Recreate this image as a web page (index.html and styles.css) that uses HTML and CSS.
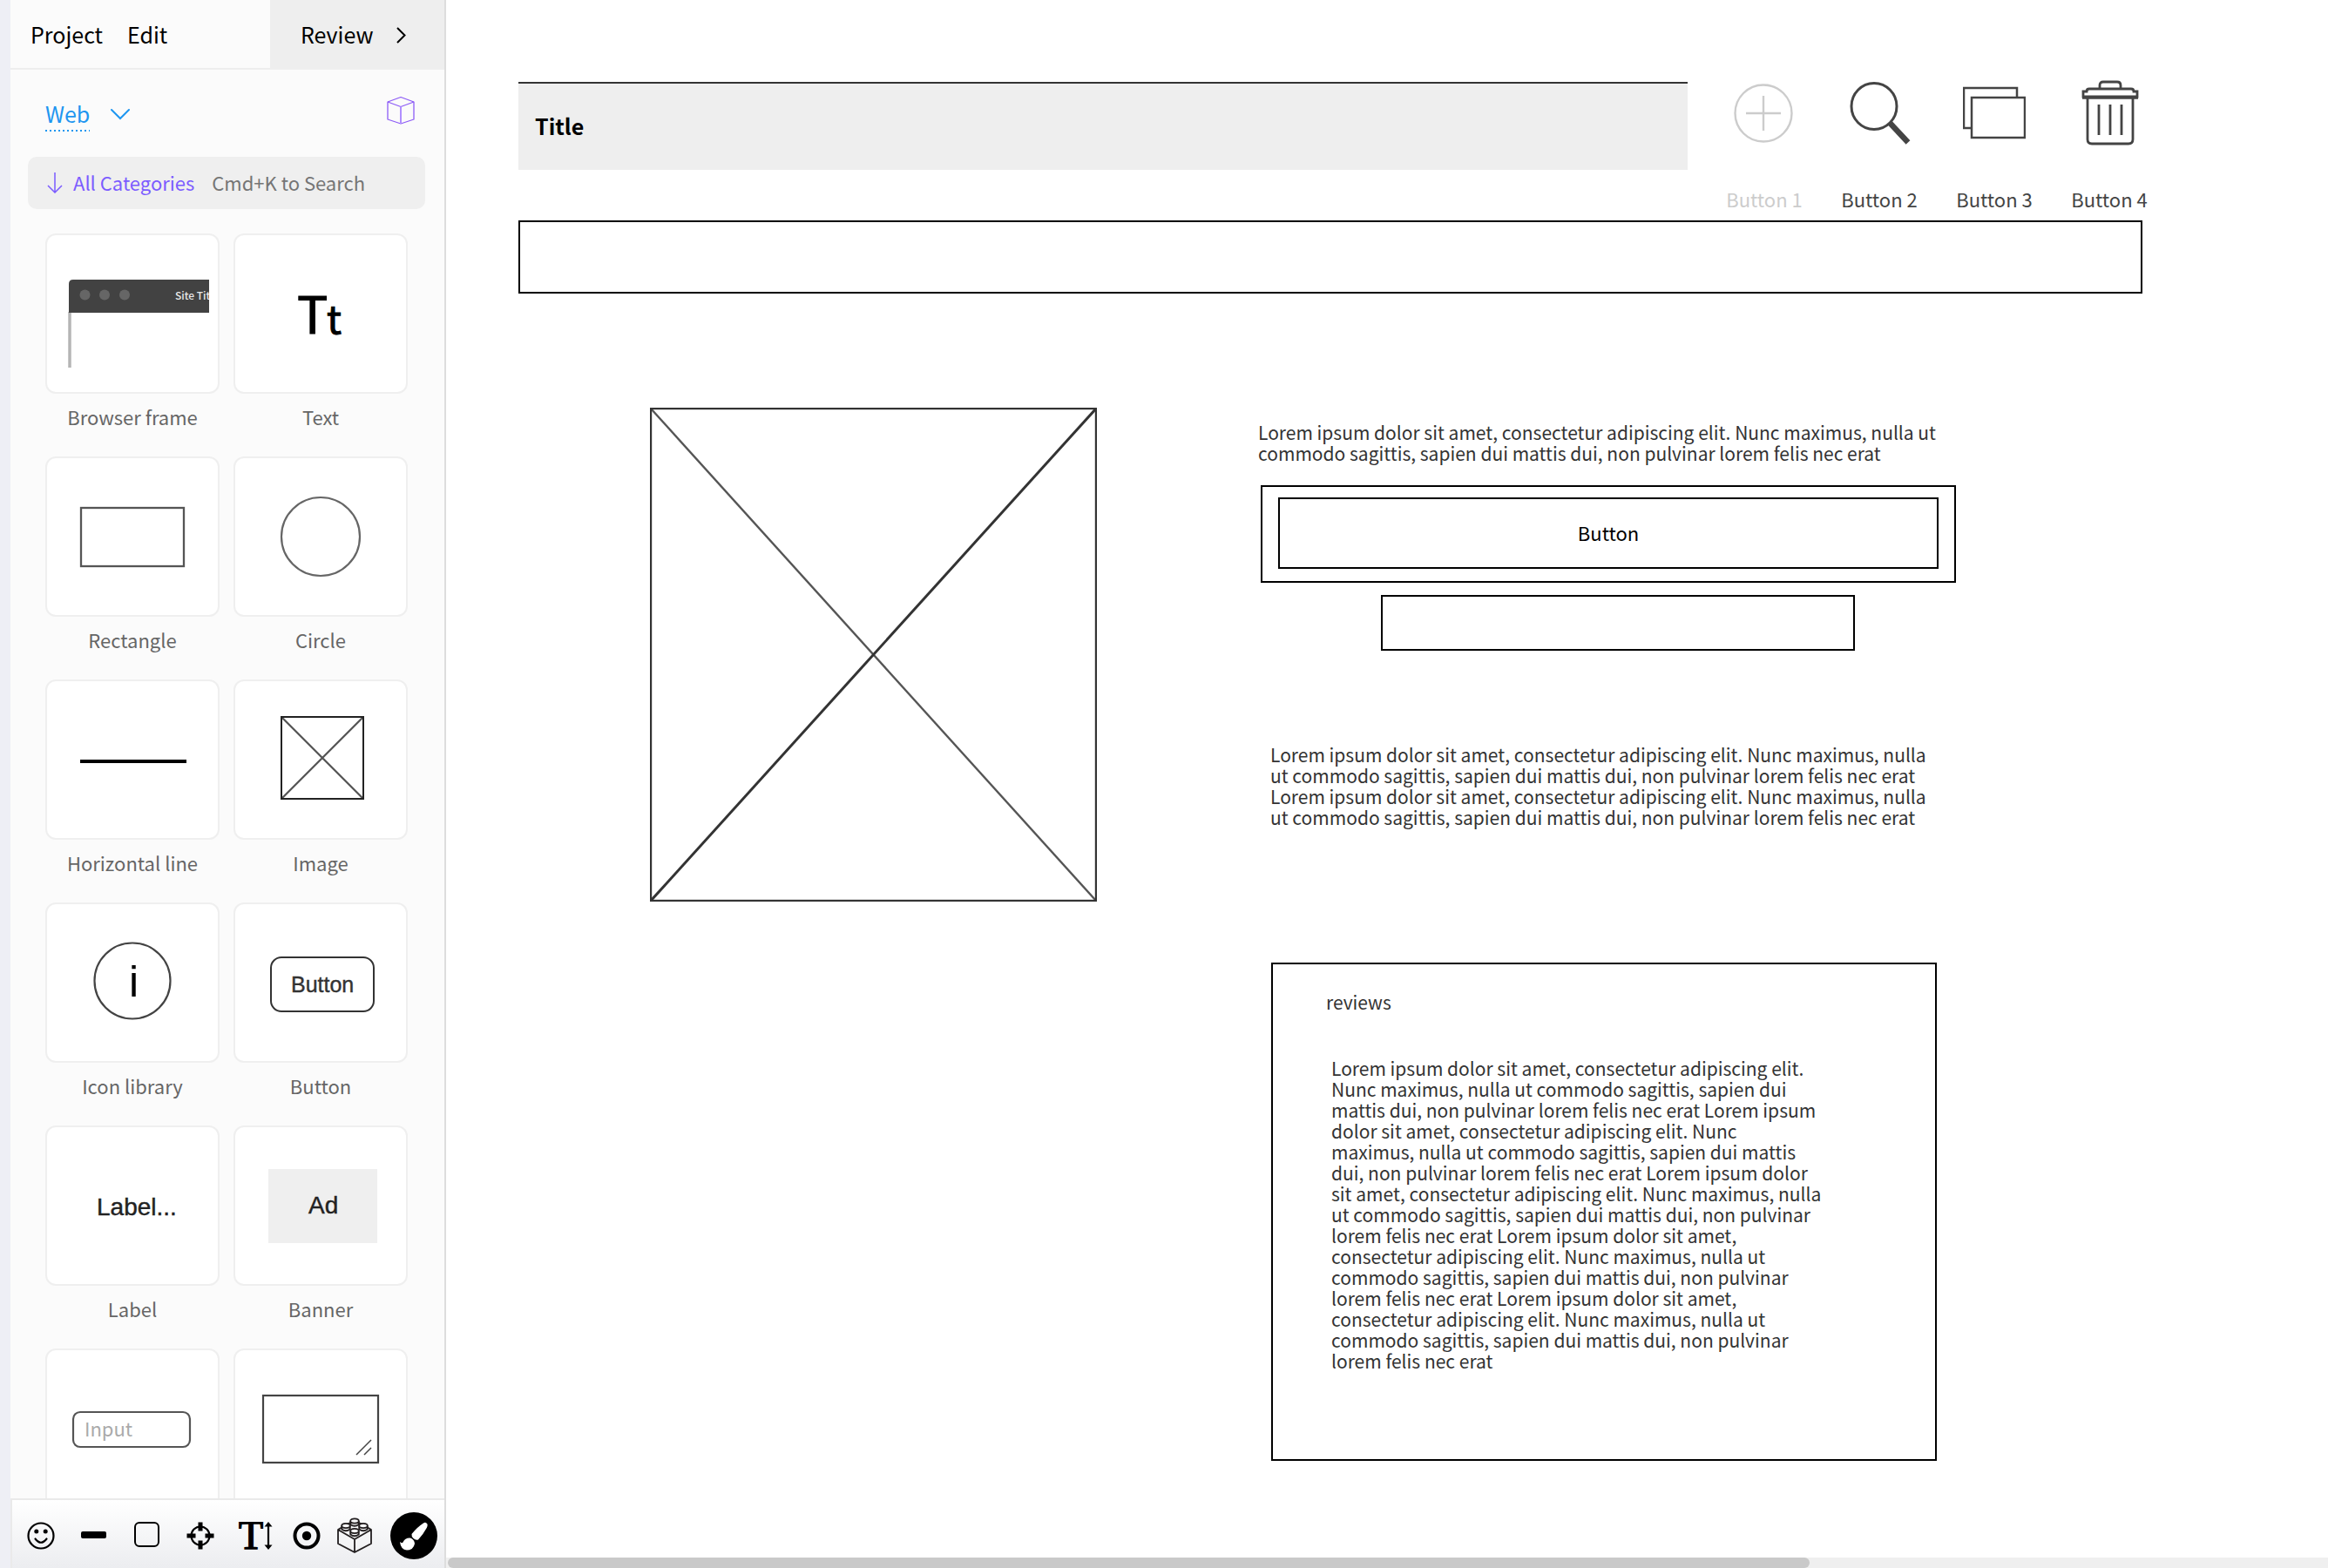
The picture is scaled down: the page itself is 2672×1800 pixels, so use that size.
FILE: index.html
```
<!DOCTYPE html>
<html lang="en">
<head>
<meta charset="utf-8">
<title>Wireframe editor</title>
<link rel="stylesheet" href="styles.css">
</head>
<body>
<div class="app">
  <aside class="sidebar">
    <header class="menu">
      <nav class="menu-items">
        <button class="menu-button" type="button">Project</button>
        <button class="menu-button" type="button">Edit</button>
      </nav>
      <button class="review" type="button">Review
        <svg width="12" height="24" viewBox="0 0 12 24" fill="none" stroke="#000" stroke-width="2"><path d="M1 5L9.500 13.500L1 22"/></svg>
      </button>
    </header>

    <div class="library-head">
      <button class="library-pick" type="button"><span class="library-name">Web</span>
        <svg width="22" height="14" viewBox="0 0 22 14" fill="none" stroke="#1e96f0" stroke-width="2" stroke-linecap="round"><path d="M1 2L11 12L21 2"/></svg>
      </button>
      <button class="cube" type="button" aria-label="Components">
        <svg width="32" height="34" viewBox="0 0 32 34" fill="none" stroke="#8d5cf6" stroke-width="1.300" stroke-linejoin="round"><path d="M16 1.500L31 7V27L16 32L1 27V7Z"/><path d="M1 7L16 12.500L31 7"/><path d="M16 12.500V32" stroke="#b08fff" stroke-width="2"/></svg>
      </button>
    </div>

    <div class="search">
      <button class="categories" type="button">
        <svg width="18" height="26" viewBox="0 0 18 26" fill="none" stroke="#7b5cff" stroke-width="1.500"><path d="M9 2V25M1 17L9 25L17 17"/></svg>
        All Categories</button>
      <input class="search-input" type="text" placeholder="Cmd+K to Search" aria-label="Search components">
    </div>

    <div class="library">
      <figure class="item">
        <svg class="thumb" viewBox="0 0 196 180">
          <defs><clipPath id="frame-clip"><rect x="20" y="40" width="166" height="112"/></clipPath></defs>
          <g clip-path="url(#frame-clip)">
            <path d="M26 88V160" stroke="#b5b5b5" stroke-width="3.500"/>
            <path d="M25 89V56Q25 51 30 51H200V89Z" fill="#424242"/>
            <g fill="#666"><circle cx="43.500" cy="68.500" r="6"/><circle cx="66" cy="68.500" r="6"/><circle cx="89" cy="68.500" r="6"/></g>
            <text x="147" y="74" class="t-site">Site Title</text>
          </g>
        </svg>
        <figcaption class="caption">Browser frame</figcaption>
      </figure>
      <figure class="item">
        <svg class="thumb" viewBox="0 0 196 180"><text x="71" y="113" class="t-big">T</text><text x="105" y="113" class="t-mid">t</text></svg>
        <figcaption class="caption">Text</figcaption>
      </figure>
      <figure class="item">
        <svg class="thumb" viewBox="0 0 196 180"><rect x="39" y="57" width="118" height="67" fill="none" stroke="#555" stroke-width="2.300"/></svg>
        <figcaption class="caption">Rectangle</figcaption>
      </figure>
      <figure class="item">
        <svg class="thumb" viewBox="0 0 196 180"><circle cx="98" cy="90" r="45" fill="none" stroke="#666" stroke-width="2.200"/></svg>
        <figcaption class="caption">Circle</figcaption>
      </figure>
      <figure class="item">
        <svg class="thumb" viewBox="0 0 196 180"><path d="M38 92H160" stroke="#000" stroke-width="4"/></svg>
        <figcaption class="caption">Horizontal line</figcaption>
      </figure>
      <figure class="item">
        <svg class="thumb" viewBox="0 0 196 180" fill="none"><path d="M53 41L147 135M147 41L53 135" stroke="#555" stroke-width="2.300"/><rect x="53" y="41" width="94" height="94" stroke="#222" stroke-width="2"/></svg>
        <figcaption class="caption">Image</figcaption>
      </figure>
      <figure class="item">
        <svg class="thumb" viewBox="0 0 196 180"><circle cx="98" cy="88" r="43.500" fill="none" stroke="#444" stroke-width="2.200"/><text x="94" y="106" class="t-info">i</text></svg>
        <figcaption class="caption">Icon library</figcaption>
      </figure>
      <figure class="item">
        <svg class="thumb" viewBox="0 0 196 180"><rect x="41" y="61" width="118" height="62" rx="12" fill="none" stroke="#333" stroke-width="2"/><text x="64" y="101" class="t-button">Button</text></svg>
        <figcaption class="caption">Button</figcaption>
      </figure>
      <figure class="item">
        <svg class="thumb" viewBox="0 0 196 180"><text x="57" y="101" class="t-label">Label...</text></svg>
        <figcaption class="caption">Label</figcaption>
      </figure>
      <figure class="item">
        <svg class="thumb" viewBox="0 0 196 180"><rect x="38" y="48" width="125" height="85" fill="#efefef"/><text x="84" y="99" class="t-label">Ad</text></svg>
        <figcaption class="caption">Banner</figcaption>
      </figure>
      <figure class="item">
        <svg class="thumb" viewBox="0 0 196 180"><rect x="30" y="71" width="134" height="40" rx="8" fill="none" stroke="#555" stroke-width="2.200"/><text x="43" y="99" class="t-input">Input</text></svg>
      </figure>
      <figure class="item">
        <svg class="thumb" viewBox="0 0 196 180" fill="none" stroke="#444" stroke-width="2.200"><rect x="32" y="52" width="132" height="77"/><path d="M139 120L156 103M148 120L156 112" stroke-width="1.500"/></svg>
      </figure>
    </div>

    <footer class="tools">
      <button class="tool" type="button" aria-label="Icons"><svg width="32" height="32" viewBox="0 0 32 32"><circle cx="16" cy="16" r="14.500" fill="none" stroke="#000" stroke-width="2.200"/><circle cx="10.800" cy="11" r="2.500"/><circle cx="21.200" cy="11" r="2.500"/><path d="M9.500 19.500Q16 28 22.500 19.500" fill="none" stroke="#000" stroke-width="2.200" stroke-linecap="round"/></svg></button>
      <button class="tool" type="button" aria-label="Line"><svg width="30" height="32" viewBox="0 0 30 32"><rect x="0" y="11" width="29" height="8" rx="2"/></svg></button>
      <button class="tool" type="button" aria-label="Box"><svg width="30" height="32" viewBox="0 0 30 32"><rect x="1" y="1" width="27" height="27" rx="5" fill="none" stroke="#000" stroke-width="2"/></svg></button>
      <button class="tool" type="button" aria-label="Hotspot"><svg width="32" height="32" viewBox="0 0 32 32"><circle cx="16" cy="16" r="10.500" fill="none" stroke="#000" stroke-width="2.200"/><path d="M16 3V8M16 24V29M3 16H8M24 16H29" stroke="#000" stroke-width="5" stroke-linecap="square"/></svg></button>
      <button class="tool" type="button" aria-label="Text"><svg width="46" height="32" viewBox="0 0 46 32"><text x="6" y="31" class="t-serif">T</text><path d="M40 4V28" stroke="#000" stroke-width="2.200"/><path d="M40 0L44.500 5.500H35.500ZM40 32L44.500 26.500H35.500Z"/></svg></button>
      <button class="tool" type="button" aria-label="Target"><svg width="32" height="32" viewBox="0 0 32 32"><circle cx="16" cy="16" r="13.500" fill="none" stroke="#000" stroke-width="4"/><circle cx="16" cy="16" r="5.200"/></svg></button>
      <div class="tools-end">
        <button type="button" aria-label="Blocks"><svg width="40" height="42" viewBox="0 0 40 42" fill="none" stroke="#231f20" stroke-width="1.800" stroke-linejoin="round"><path d="M1 14V30L20 40L39 30V14L20 25ZM20 25V40M1 14L5 11.500M39 14L35 11.500M11 8L15 6M29 8L25 6"/><g fill="#f8f8f9"><path d="M15.200 4V8Q20 11.500 24.800 8V4M5.200 9.500V13.500Q10 17 14.800 13.500V9.500M25.200 9.500V13.500Q30 17 34.800 13.500V9.500M15.200 15.500V19.500Q20 23 24.800 19.500V15.500"/><ellipse cx="20" cy="4" rx="4.800" ry="2.600"/><ellipse cx="10" cy="9.500" rx="4.800" ry="2.600"/><ellipse cx="30" cy="9.500" rx="4.800" ry="2.600"/><ellipse cx="20" cy="15.500" rx="4.800" ry="2.600"/></g></svg></button>
        <button type="button" aria-label="Sketch"><svg width="54" height="54" viewBox="0 0 54 54"><circle cx="27" cy="27" r="27"/><path d="M41.500 12.500Q43.500 13.500 42 17.500Q38 25 32 31.500Q29 32.500 26.500 30Q24 27.500 24.500 25Q31 17 38 12.500Q40 11 41.500 12.500ZM23 29.500Q27.500 31 28 36Q26.500 43.500 19 43.500Q12 43 11 34Q13 36 14.500 34.500Q17 29 23 29.500Z" fill="#fff"/></svg></button>
      </div>
    </footer>
  </aside>

  <main class="canvas">
    <h1 class="node title-bar">Title</h1>
    <div class="node toolbar">
      <button class="action action-off" type="button"><svg width="72" height="78" viewBox="0 0 72 78" fill="none" stroke="#ccc" stroke-width="2.400"><ellipse cx="35" cy="38" rx="32.500" ry="32.500"/><path d="M15 38H55M35 18V58"/></svg>Button 1</button>
      <button class="action" type="button"><svg width="72" height="78" viewBox="0 0 72 78" fill="none" stroke="#444" stroke-width="3"><ellipse cx="30" cy="30" rx="26" ry="26.500"/><path d="M48 49L69 71.500" stroke-width="6.500"/></svg>Button 2</button>
      <button class="action" type="button"><svg width="72" height="78" viewBox="0 0 72 78" fill="none" stroke="#444" stroke-width="2.500"><path d="M9 55H1V9H62V19"/><rect x="10" y="20" width="61" height="46"/></svg>Button 3</button>
      <button class="action" type="button"><svg width="72" height="78" viewBox="0 0 72 78" fill="none" stroke="#444" stroke-width="2.800"><path d="M25 10V6Q25 2 29 2H45Q49 2 49 6V10"/><path d="M6 19H68V13H64Q64 10 61 10H13Q10 10 10 13H6Z"/><path d="M5 20H69" stroke-width="3.500"/><path d="M11 21V68Q11 73 16 73H58Q63 73 63 68V21M24 28V63M37 28V63M50 28V63"/></svg>Button 4</button>
    </div>
    <div class="node box nav-box"></div>
    <svg class="node image-box" viewBox="0 0 513 567" fill="none"><path d="M1 1L512 566" stroke="#555" stroke-width="2.400"/><path d="M512 1L1 566" stroke="#333" stroke-width="3"/><rect x="1" y="1" width="511" height="565" stroke="#333" stroke-width="2.400"/></svg>
    <p class="node copy intro">Lorem ipsum dolor sit amet, consectetur adipiscing elit. Nunc maximus, nulla ut<br>commodo sagittis, sapien dui mattis dui, non pulvinar lorem felis nec erat</p>
    <div class="node box button-box"><button class="wire-button" type="button">Button</button></div>
    <div class="node box small-box"></div>
    <p class="node copy details">Lorem ipsum dolor sit amet, consectetur adipiscing elit. Nunc maximus, nulla<br>ut commodo sagittis, sapien dui mattis dui, non pulvinar lorem felis nec erat<br>Lorem ipsum dolor sit amet, consectetur adipiscing elit. Nunc maximus, nulla<br>ut commodo sagittis, sapien dui mattis dui, non pulvinar lorem felis nec erat</p>
    <section class="node box reviews">
      <h2 class="copy reviews-title">reviews</h2>
      <p class="copy reviews-text">Lorem ipsum dolor sit amet, consectetur adipiscing elit.<br>Nunc maximus, nulla ut commodo sagittis, sapien dui<br>mattis dui, non pulvinar lorem felis nec erat Lorem ipsum<br>dolor sit amet, consectetur adipiscing elit. Nunc<br>maximus, nulla ut commodo sagittis, sapien dui mattis<br>dui, non pulvinar lorem felis nec erat Lorem ipsum dolor<br>sit amet, consectetur adipiscing elit. Nunc maximus, nulla<br>ut commodo sagittis, sapien dui mattis dui, non pulvinar<br>lorem felis nec erat Lorem ipsum dolor sit amet,<br>consectetur adipiscing elit. Nunc maximus, nulla ut<br>commodo sagittis, sapien dui mattis dui, non pulvinar<br>lorem felis nec erat Lorem ipsum dolor sit amet,<br>consectetur adipiscing elit. Nunc maximus, nulla ut<br>commodo sagittis, sapien dui mattis dui, non pulvinar<br>lorem felis nec erat</p>
    </section>
    <div class="scrollbar"><div class="scroll-thumb"></div></div>
  </main>
</div>
</body>
</html>
```
FILE: styles.css
```
* { box-sizing: border-box; }

body {
  margin: 0;
  background: #fff;
  font-family: "Noto Sans CJK SC", "Noto Sans", sans-serif;
  font-size: 22px;
  color: #000;
}

button, input {
  margin: 0;
  padding: 0;
  border: 0;
  background: none;
  color: inherit;
  font: inherit;
}

svg { display: block; flex: none; }

.app {
  display: flex;
  height: 100vh;
  overflow: hidden;
}

/* Sidebar */
.sidebar {
  display: flex;
  flex-direction: column;
  flex: none;
  width: 512px;
  border-left: 12px solid #eeeff5;
  border-right: 2px solid #ddd;
  background: #fbfbfb;
}

.menu {
  display: flex;
  justify-content: space-between;
  flex: none;
  height: 80px;
  font-size: 25px;
}

.menu-items {
  display: flex;
  flex: 1;
  gap: 28px;
  padding-left: 23px;
  border-bottom: 2px solid #eee;
}

.review {
  display: flex;
  align-items: center;
  gap: 26px;
  width: 200px;
  padding: 0 0 2px 35px;
  background: #eee;
}

.library-head {
  display: flex;
  justify-content: space-between;
  align-items: flex-start;
  flex: none;
  height: 100px;
  padding: 30px 34px 0 40px;
}

.library-pick {
  display: flex;
  align-items: center;
  gap: 24px;
  color: #1e96f0;
  font-size: 25px;
  line-height: 40px;
}

.library-name {
  padding-bottom: 1px;
  background: repeating-linear-gradient(90deg, #1e96f0 0 2px, transparent 2px 5px) left bottom / 100% 2px no-repeat;
}

.search {
  display: flex;
  align-items: center;
  flex: none;
  height: 60px;
  margin: 0 22px 28px 20px;
  padding: 0 20px 2px 22px;
  border-radius: 10px;
  background: #efefef;
}

.categories {
  display: flex;
  align-items: center;
  gap: 12px;
  flex: none;
  color: #7b5cff;
}

.search-input {
  flex: 1;
  min-width: 0;
  margin-left: 20px;
  outline: 0;
}

.search-input::placeholder { color: #757575; opacity: 1; }

.library {
  display: grid;
  grid-template-columns: 1fr 1fr;
  align-content: start;
  column-gap: 16px;
  flex: 1;
  min-height: 0;
  padding: 0 42px 0 40px;
  overflow: hidden;
}

.item { margin: 0; }

.thumb {
  width: 100%;
  height: 184px;
  border: 2px solid #efefef;
  border-radius: 12px;
  background: #fff;
}

.caption {
  padding: 10px 0 30px;
  color: #666;
  line-height: 32px;
  text-align: center;
}

.t-site { fill: #e8e8e8; font-size: 12px; font-weight: 500; }
.t-big { font-size: 59px; stroke: #000; }
.t-mid { font-size: 45px; stroke: #000; }
.t-info, .t-button, .t-label { font-family: "Liberation Sans", sans-serif; }
.t-info { font-size: 50px; }
.t-button { font-size: 25px; fill: #333; stroke: #333; stroke-width: 0.4; }
.t-label { font-size: 28px; fill: #222; stroke: #222; stroke-width: 0.4; }
.t-input { font-size: 22px; fill: #aaa; }
.t-serif { font: 46px "Liberation Serif", serif; stroke: #000; stroke-width: 1.5; }

.tools {
  display: flex;
  align-items: center;
  flex: none;
  height: 80px;
  padding: 4px 8px 0 2px;
  border-top: 2px solid #eaeaea;
  border-left: 2px solid #eaeaea;
  background: linear-gradient(#fff, #ecedf0);
}

.tool {
  display: flex;
  justify-content: center;
  flex: none;
  width: 61px;
}

.tools-end {
  display: flex;
  align-items: center;
  gap: 21px;
  margin-left: auto;
}

/* Canvas with freely placed wireframe nodes */
.canvas {
  position: relative;
  flex: 1;
  overflow: hidden;
}

.node { position: absolute; margin: 0; }

.box { border: 2px solid #000; background: #fff; }

.copy {
  margin: 0;
  color: #333;
  font-size: 21px;
  font-weight: 400;
  line-height: 24px;
  white-space: nowrap;
}

.title-bar {
  left: 83px;
  top: 94px;
  width: 1342px;
  height: 101px;
  padding-left: 19px;
  border-top: 2px solid #333;
  background: #eee;
  font-size: 25px;
  line-height: 96px;
}

.toolbar {
  display: flex;
  left: 1447px;
  top: 92px;
}

.action {
  display: flex;
  flex-direction: column;
  align-items: center;
  width: 132px;
  gap: 42px;
  color: #444;
  line-height: 32px;
}

.action-off { color: #ccc; }

.nav-box { left: 83px; top: 253px; width: 1864px; height: 84px; }

.image-box { left: 234px; top: 468px; width: 513px; height: 567px; }

.intro { left: 932px; top: 484px; }

.button-box {
  display: flex;
  left: 935px;
  top: 557px;
  width: 798px;
  height: 112px;
  padding: 12px 18px 14px;
}

.wire-button {
  flex: 1;
  padding-bottom: 3px;
  border: 2px solid #000;
}

.small-box { left: 1073px; top: 683px; width: 544px; height: 64px; }

.details { left: 946px; top: 854px; }

.reviews {
  left: 947px;
  top: 1105px;
  width: 764px;
  height: 572px;
  padding: 31px 61px;
}

.reviews-title { margin-bottom: 52px; }

.reviews-text { padding-left: 6px; }

.scrollbar {
  position: absolute;
  left: 0;
  right: 0;
  bottom: 0;
  padding-left: 2px;
  background: #efefef;
}

.scroll-thumb {
  width: 1563px;
  height: 12px;
  border-radius: 6px;
  background: #c9c9c9;
}
```
